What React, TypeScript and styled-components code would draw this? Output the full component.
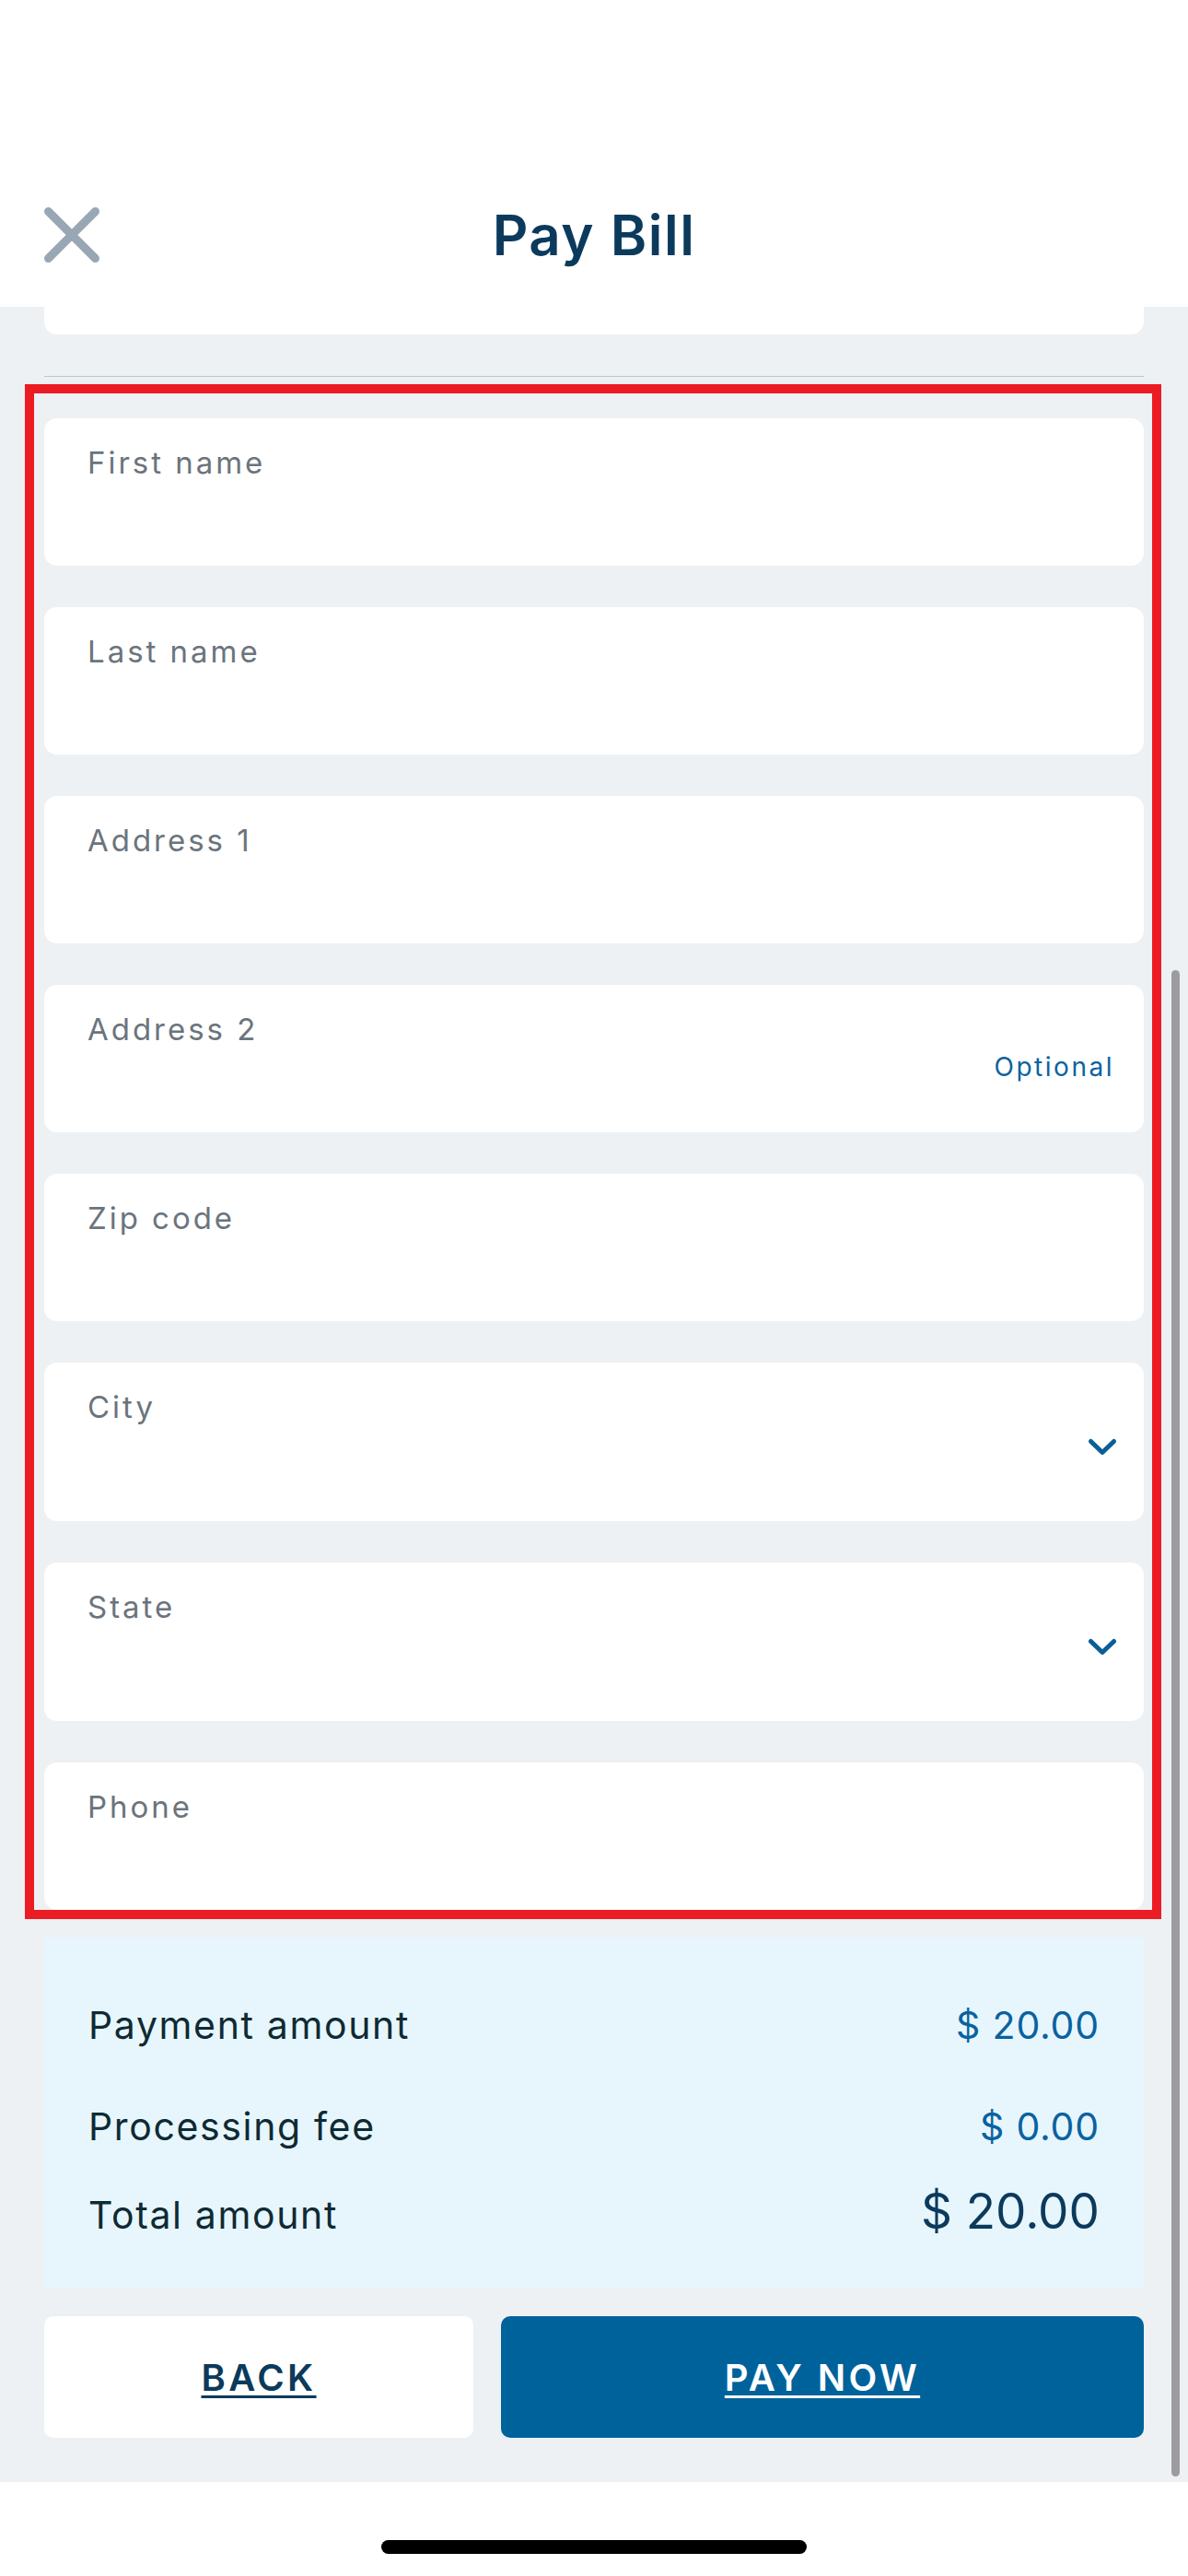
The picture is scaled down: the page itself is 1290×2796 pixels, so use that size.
import React from "react";
import styled, { createGlobalStyle } from "styled-components";

const GlobalStyle = createGlobalStyle`
  html, body {
    margin: 0;
    padding: 0;
    background: #ffffff;
  }
  body {
    font-family: Inter, "Noto Sans", "Liberation Sans", sans-serif;
    -webkit-font-smoothing: antialiased;
  }
  * { box-sizing: border-box; }
`;

const Screen = styled.div`
  width: 1290px;
  min-height: 2796px;
  display: flex;
  flex-direction: column;
  background: #ffffff;
`;

const Header = styled.header`
  height: 333px;
  padding: 225px 0 48px;
  display: grid;
  grid-template-columns: 1fr auto 1fr;
  align-items: center;
  background: #ffffff;
`;

const CloseButton = styled.button`
  justify-self: start;
  margin-left: 48px;
  width: 60px;
  height: 60px;
  padding: 0;
  border: none;
  background: transparent;
  display: flex;
`;

const Title = styled.h1`
  margin: 0;
  font-size: 60px;
  line-height: 60px;
  font-weight: 600;
  color: #0b3a5c;
  letter-spacing: 0.025em;
`;

const Scroll = styled.main`
  position: relative;
  flex: 1;
  display: flex;
  flex-direction: column;
  padding: 0 48px 48px;
  background: #edf1f4;
`;

const ScrollIndicator = styled.div`
  position: absolute;
  top: 720px;
  bottom: 6px;
  right: 9px;
  width: 9px;
  border-radius: 5px;
  background: #9c9c9e;
`;

const PreviousCard = styled.div`
  height: 30px;
  background: #ffffff;
  border-radius: 0 0 14px 14px;
`;

const Divider = styled.hr`
  margin: 45px 0 0;
  height: 1px;
  border: none;
  background: #bcc5cf;
`;

const FieldList = styled.section`
  position: relative;
  margin-top: 45px;
  display: flex;
  flex-direction: column;
  gap: 45px;

  &::after {
    content: "";
    position: absolute;
    top: -37px;
    left: -21px;
    right: -19px;
    bottom: -10px;
    border: 10px solid #ec1c24;
    pointer-events: none;
  }
`;

const FieldCard = styled.div<{ $select?: boolean }>`
  height: ${(p) => (p.$select ? 172 : 160)}px;
  padding: 32px 30px 0 47px;
  display: flex;
  justify-content: space-between;
  align-items: flex-start;
  background: #ffffff;
  border-radius: 14px;
`;

const FieldLabel = styled.span`
  font-size: 33px;
  line-height: 33px;
  font-weight: 400;
  letter-spacing: 0.09em;
  color: #6b747d;
`;

const OptionalTag = styled.span`
  margin-top: 43px;
  margin-right: 2px;
  font-size: 28px;
  line-height: 28px;
  letter-spacing: 0.09em;
  color: #0b63a0;
`;

const Chevron = styled.svg`
  margin-top: 51px;
  width: 30px;
  height: 17px;
  overflow: visible;
`;

const Summary = styled.section`
  margin-top: 30px;
  height: 381px;
  padding: 75px 48px 0 48px;
  display: flex;
  flex-direction: column;
  background: #e7f6fd;
`;

const SummaryRow = styled.div<{ $space: number }>`
  margin-top: ${(p) => p.$space}px;
  display: flex;
  justify-content: space-between;
  align-items: baseline;
`;

const SummaryLabel = styled.span`
  font-size: 41px;
  line-height: 41px;
  letter-spacing: 0.04em;
  color: #0f2a33;
`;

const SummaryValue = styled.span<{ $total?: boolean }>`
  font-size: ${(p) => (p.$total ? 53 : 41)}px;
  line-height: 1;
  letter-spacing: ${(p) => (p.$total ? "0" : "0.02em")};
  color: ${(p) => (p.$total ? "#0b3a5c" : "#0a62a0")};
`;

const Actions = styled.div`
  margin-top: 30px;
  display: grid;
  grid-template-columns: 466px 1fr;
  gap: 30px;
`;

const ActionButton = styled.button<{ $primary?: boolean }>`
  height: 132px;
  border: none;
  border-radius: 10px;
  background: ${(p) => (p.$primary ? "#00629b" : "#ffffff")};
  color: ${(p) => (p.$primary ? "#ffffff" : "#0b3a5c")};
  font-family: Inter, "Noto Sans", sans-serif;
  font-size: 40px;
  font-weight: 600;
  letter-spacing: 0.085em;
  text-decoration: underline;
  text-decoration-thickness: 3px;
  text-underline-offset: 5px;
`;

const Footer = styled.footer`
  height: 102px;
  display: flex;
  justify-content: center;
  padding-top: 63px;
  background: #ffffff;
`;

const HomeIndicator = styled.div`
  width: 462px;
  height: 15px;
  border-radius: 8px;
  background: #000000;
`;

type Field = { label: string; optional?: boolean; select?: boolean };

const fields: Field[] = [
  { label: "First name" },
  { label: "Last name" },
  { label: "Address 1" },
  { label: "Address 2", optional: true },
  { label: "Zip code" },
  { label: "City", select: true },
  { label: "State", select: true },
  { label: "Phone" },
];

const summary = [
  { label: "Payment amount", value: "$ 20.00", space: 0 },
  { label: "Processing fee", value: "$ 0.00", space: 69 },
  { label: "Total amount", value: "$ 20.00", space: 45, total: true },
];

export default function App() {
  return (
    <>
      <GlobalStyle />
      <Screen>
        <Header>
          <CloseButton aria-label="Close">
            <svg width="60" height="60" viewBox="0 0 60 60">
              <path
                d="M4.5 4.5 L55.5 55.5 M55.5 4.5 L4.5 55.5"
                stroke="#99a7b4"
                strokeWidth="9"
                strokeLinecap="round"
                fill="none"
              />
            </svg>
          </CloseButton>
          <Title>Pay Bill</Title>
          <span />
        </Header>
        <Scroll>
          <PreviousCard />
          <Divider />
          <FieldList>
            {fields.map((f) => (
              <FieldCard key={f.label} $select={f.select}>
                <FieldLabel>{f.label}</FieldLabel>
                {f.optional && <OptionalTag>Optional</OptionalTag>}
                {f.select && (
                  <Chevron viewBox="0 0 30 17">
                    <path
                      d="M2.5 2.5 L15 14.5 L27.5 2.5"
                      stroke="#0a5f96"
                      strokeWidth="5"
                      strokeLinecap="round"
                      strokeLinejoin="round"
                      fill="none"
                    />
                  </Chevron>
                )}
              </FieldCard>
            ))}
          </FieldList>
          <Summary>
            {summary.map((r) => (
              <SummaryRow key={r.label} $space={r.space}>
                <SummaryLabel>{r.label}</SummaryLabel>
                <SummaryValue $total={r.total}>{r.value}</SummaryValue>
              </SummaryRow>
            ))}
          </Summary>
          <Actions>
            <ActionButton>BACK</ActionButton>
            <ActionButton $primary>PAY NOW</ActionButton>
          </Actions>
          <ScrollIndicator />
        </Scroll>
        <Footer>
          <HomeIndicator />
        </Footer>
      </Screen>
    </>
  );
}
